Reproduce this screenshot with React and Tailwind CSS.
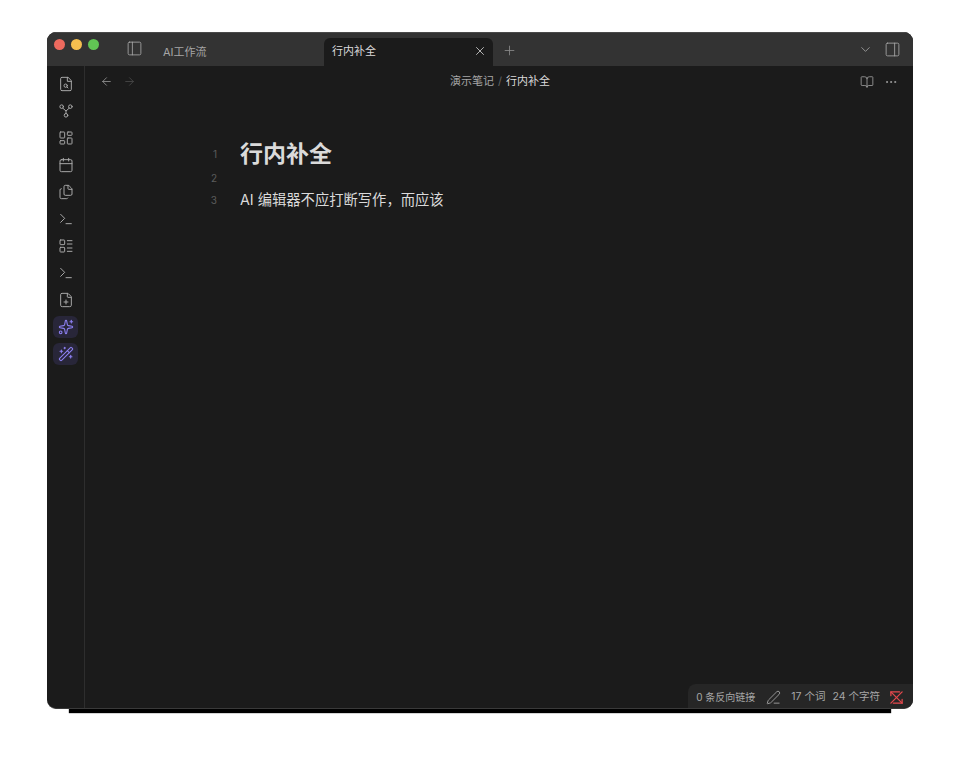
import React from "react";
import {
  ArrowLeft,
  ArrowRight,
  BookOpen,
  Calendar,
  ChevronDown,
  Ellipsis,
  FilePlus,
  Files,
  LayoutDashboard,
  PanelLeft,
  PanelRight,
  PenLine,
  Plus,
  Sparkles,
  Terminal,
  WandSparkles,
  X,
} from "lucide-react";

const font = "font-['Inter','Noto_Sans_CJK_SC',sans-serif]";

const Svg = ({ size = 16, width = 1.5, children }) => (
  <svg width={size} height={size} viewBox="0 0 24 24" fill="none" stroke="currentColor" strokeWidth={width} strokeLinecap="round" strokeLinejoin="round">
    {children}
  </svg>
);

const FileSearchIcon = () => (
  <Svg>
    <path d="M14.5 2H6a2 2 0 0 0-2 2v16a2 2 0 0 0 2 2h12a2 2 0 0 0 2-2V7.5z" />
    <path d="M14 2v6h6" />
    <circle cx="11.5" cy="14.5" r="2.5" />
    <path d="m13.5 16.5 1.5 1.5" />
  </Svg>
);

const GraphIcon = () => (
  <Svg>
    <circle cx="5.5" cy="5.5" r="2.7" />
    <circle cx="18.5" cy="5.5" r="2.7" />
    <circle cx="12" cy="18.5" r="2.7" />
    <path d="M7.5 8 12 12l4.5-4M12 12v3.8" />
  </Svg>
);

const ListIcon = () => (
  <Svg>
    <rect x="3" y="3" width="7" height="7" rx="1" />
    <rect x="3" y="14" width="7" height="7" rx="1" />
    <path d="M14 4h7M14 9h7M14 15h7M14 20h7" />
  </Svg>
);

const SyncOffIcon = () => (
  <Svg size={15} width={2}>
    <path d="M3 9V3h14" />
    <path d="M21 3 3 21" />
    <path d="M21 15v6H7" />
    <path d="m3 3 18 18" />
  </Svg>
);

const SideItem = ({ children, active }) => (
  <div className="h-[27px] flex items-center justify-center">
    <div className={`w-[25px] h-[22px] rounded-[6px] flex items-center justify-center ${active ? "bg-[#282639] text-[#8d80f2]" : "text-[#a8a8a8]"}`}>
      {children}
    </div>
  </div>
);

export default function App() {
  return (
    <div className={`min-h-[771px] bg-white pt-[32px] pl-[47px] ${font}`}>
      <div className="w-[866px] h-[677px] rounded-[9px] overflow-hidden bg-[#1b1b1b] flex flex-col shadow-[0_26px_1px_-22px_#000] border-b border-[#3a3a3a]">
        {/* Title bar */}
        <div className="h-[34px] flex-shrink-0 bg-[#333333] border-t border-[#4a4a4a] flex items-end">
          <div className="self-start pt-[6px] pl-[7px] flex gap-[6px]">
            <div className="w-[11px] h-[11px] rounded-full bg-[#ed6a5e]"></div>
            <div className="w-[11px] h-[11px] rounded-full bg-[#f5bf4f]"></div>
            <div className="w-[11px] h-[11px] rounded-full bg-[#61c554]"></div>
          </div>
          <div className="self-start ml-[27px] mt-[7px] text-[#a8a8a8]">
            <PanelLeft size={17} strokeWidth={1.2} />
          </div>
          <div className="w-[161px] ml-[20px] h-[27px] flex items-center text-[11px] text-[#a6a6a6]">AI工作流</div>
          <div className="relative w-[169px] h-[28px] bg-[#1b1b1b] rounded-t-[6px] flex items-center justify-between pl-[8px] pr-[6px] pb-[2px] text-[11px] text-[#dadada]">
            <span>行内补全</span>
            <X size={14} strokeWidth={1.5} className="text-[#c8c8c8]" />
          </div>
          <div className="h-[29px] ml-[9px] flex items-center text-[#8c8c8c] pb-[2px]">
            <Plus size={15} strokeWidth={1.3} />
          </div>
          <div className="ml-auto self-start mt-[8px] flex items-center gap-[11px] pr-[12px] text-[#a8a8a8]">
            <ChevronDown size={15} strokeWidth={1.3} />
            <PanelRight size={17} strokeWidth={1.2} />
          </div>
        </div>

        <div className="flex-1 flex min-h-0">
          {/* Left ribbon */}
          <div className="w-[38px] flex-shrink-0 border-r border-[#2e2e2e] flex flex-col pt-[4px]">
            <SideItem><FileSearchIcon /></SideItem>
            <SideItem><GraphIcon /></SideItem>
            <SideItem><LayoutDashboard size={16} strokeWidth={1.5} /></SideItem>
            <SideItem><Calendar size={16} strokeWidth={1.5} /></SideItem>
            <SideItem><Files size={16} strokeWidth={1.5} /></SideItem>
            <SideItem><Terminal size={16} strokeWidth={1.5} /></SideItem>
            <SideItem><ListIcon /></SideItem>
            <SideItem><Terminal size={16} strokeWidth={1.5} /></SideItem>
            <SideItem><FilePlus size={16} strokeWidth={1.5} /></SideItem>
            <SideItem active><Sparkles size={16} strokeWidth={1.6} /></SideItem>
            <SideItem active><WandSparkles size={16} strokeWidth={1.6} /></SideItem>
          </div>

          {/* Main pane */}
          <div className="relative flex-1 min-w-0 flex flex-col">
            <div className="h-[31px] flex-shrink-0 flex items-center pl-[15px] pr-[15px]">
              <div className="w-[72px] flex items-center gap-[10px]">
                <ArrowLeft size={13} strokeWidth={1.4} className="text-[#a0a0a0]" />
                <ArrowRight size={13} strokeWidth={1.4} className="text-[#4f4f4f]" />
              </div>
              <div className="flex-1 text-center text-[11px] text-[#a6a6a6]">
                演示笔记<span className="mx-[4px] text-[#666666]">/</span><span className="text-[#dadada]">行内补全</span>
              </div>
              <div className="w-[70px] flex items-center justify-end gap-[10px] text-[#a0a0a0]">
                <BookOpen size={14} strokeWidth={1.4} />
                <Ellipsis size={14} strokeWidth={1.6} />
              </div>
            </div>

            {/* Editor lines */}
            <div className="pt-[39px]">
              <div className="flex items-center h-[36px]">
                <span className="w-[132px] text-right text-[10px] text-[#5c5c5c]">1</span>
                <span className="ml-[23px] text-[23px] font-bold text-[#dadada]">行内补全</span>
              </div>
              <div className="flex items-center h-[12px]">
                <span className="w-[132px] text-right text-[10px] text-[#5c5c5c]">2</span>
              </div>
              <div className="flex items-center h-[32px]">
                <span className="w-[132px] text-right text-[10px] text-[#5c5c5c]">3</span>
                <span className="ml-[23px] text-[14.3px] text-[#dadada]">AI 编辑器不应打断写作，而应该</span>
              </div>
            </div>

            {/* Status bar */}
            <div className="absolute right-0 bottom-0 h-[24px] bg-[#262626] rounded-tl-[8px] flex items-center pt-[2px] pl-[8px] pr-[9px] text-[10px] text-[#a6a6a6]">
              <span>0 条反向链接</span>
              <span className="ml-[11px] mr-[10px]"><PenLine size={15} strokeWidth={1.4} /></span>
              <span className="text-[10.5px]">17 个词</span>
              <span className="ml-[7px] text-[10.5px]">24 个字符</span>
              <span className="ml-[9px] text-[#e5484d]"><SyncOffIcon /></span>
            </div>
          </div>
        </div>
      </div>
    </div>
  );
}
